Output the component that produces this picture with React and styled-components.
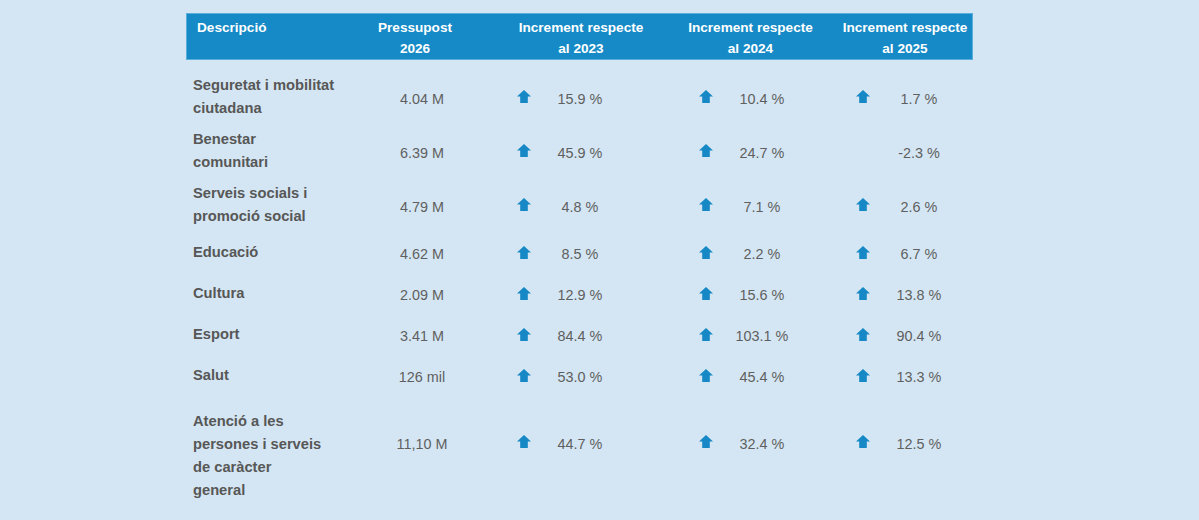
import React from "react";
import styled, { createGlobalStyle } from "styled-components";

const Global = createGlobalStyle`
  html, body {
    margin: 0;
    background: #d4e6f3;
  }
  body {
    font-family: "Liberation Sans", Arial, sans-serif;
  }
`;

const Page = styled.div`
  width: 1199px;
  height: 520px;
  box-sizing: border-box;
  padding: 13px 0 0 186px;
  background: #d4e6f3;
  overflow: hidden;
`;

const Table = styled.div`
  width: 787px;
`;

const Head = styled.div`
  display: grid;
  grid-template-columns: 146px 164px 168px 171px 138px;
  height: 47px;
  box-sizing: border-box;
  background: #168ac6;
  border: 1px solid #5aaedc;
`;

const HeadCell = styled.div`
  padding: 3px ${(p) => (p.$left ? "0 0 10px" : "0")};
  text-align: ${(p) => (p.$left ? "left" : "center")};
  color: #ffffff;
  font-weight: 700;
  font-size: 13.6px;
  line-height: 21px;
  white-space: nowrap;
`;

const Body = styled.div`
  padding-top: 12px;
`;

const Row = styled.div`
  display: grid;
  grid-template-columns: 159px 146px 182px 157px 143px;
  align-items: center;
  min-height: 37px;
  padding: ${(p) => p.$pad || "2px 0"};
`;

const Label = styled.div`
  padding: 0 0 4px 7px;
  font-weight: 700;
  font-size: 14.7px;
  line-height: 23px;
  color: #575757;
`;

const Amount = styled.div`
  padding: 0 0 ${(p) => (p.$raise ? "27px" : "0")} 8px;
  text-align: center;
  font-size: 14.4px;
  line-height: 23px;
  color: #5f5f5f;
`;

const Change = styled.div`
  display: flex;
  align-items: center;
  padding: 0 0 ${(p) => (p.$raise ? "27px" : "0")} 26px;
`;

const ArrowBox = styled.svg`
  width: 14px;
  height: 13px;
  flex: none;
  margin-bottom: 5px;
  visibility: ${(p) => (p.$hidden ? "hidden" : "visible")};
`;

const Pct = styled.span`
  width: 70px;
  margin-left: 14px;
  text-align: center;
  font-size: 14.4px;
  line-height: 23px;
  color: #5f5f5f;
`;

const Up = ({ hidden }) => (
  <ArrowBox $hidden={hidden} viewBox="0 0 14 13">
    <path d="M7 0 L14 6.5 L10.8 6.5 L10.8 13 L3.2 13 L3.2 6.5 L0 6.5 Z" fill="#1688c5" />
  </ArrowBox>
);

const rows = [
  { label: ["Seguretat i mobilitat", "ciutadana"], amount: "4.04 M", v: ["15.9 %", "10.4 %", "1.7 %"] },
  { label: ["Benestar", "comunitari"], amount: "6.39 M", v: ["45.9 %", "24.7 %", "-2.3 %"] },
  { label: ["Serveis socials i", "promoció social"], amount: "4.79 M", v: ["4.8 %", "7.1 %", "2.6 %"] },
  { label: ["Educació"], amount: "4.62 M", v: ["8.5 %", "2.2 %", "6.7 %"] },
  { label: ["Cultura"], amount: "2.09 M", v: ["12.9 %", "15.6 %", "13.8 %"] },
  { label: ["Esport"], amount: "3.41 M", v: ["84.4 %", "103.1 %", "90.4 %"] },
  { label: ["Salut"], amount: "126 mil", v: ["53.0 %", "45.4 %", "13.3 %"] },
  {
    label: ["Atenció a les", "persones i serveis", "de caràcter", "general"],
    amount: "11,10 M",
    v: ["44.7 %", "32.4 %", "12.5 %"],
    pad: "11.5px 0 8px",
    raise: true,
  },
];

export default function App() {
  return (
    <Page>
      <Global />
      <Table>
        <Head>
          <HeadCell $left>Descripció</HeadCell>
          <HeadCell>
            Pressupost
            <br />
            2026
          </HeadCell>
          <HeadCell>
            Increment respecte
            <br />
            al 2023
          </HeadCell>
          <HeadCell>
            Increment respecte
            <br />
            al 2024
          </HeadCell>
          <HeadCell>
            Increment respecte
            <br />
            al 2025
          </HeadCell>
        </Head>
        <Body>
          {rows.map((r, i) => (
            <Row key={i} $pad={r.pad}>
              <Label>
                {r.label.map((l, j) => (
                  <React.Fragment key={j}>
                    {j > 0 && <br />}
                    {l}
                  </React.Fragment>
                ))}
              </Label>
              <Amount $raise={r.raise}>{r.amount}</Amount>
              {r.v.map((val, k) => (
                <Change key={k} $raise={r.raise}>
                  <Up hidden={val.startsWith("-")} />
                  <Pct>{val}</Pct>
                </Change>
              ))}
            </Row>
          ))}
        </Body>
      </Table>
    </Page>
  );
}
